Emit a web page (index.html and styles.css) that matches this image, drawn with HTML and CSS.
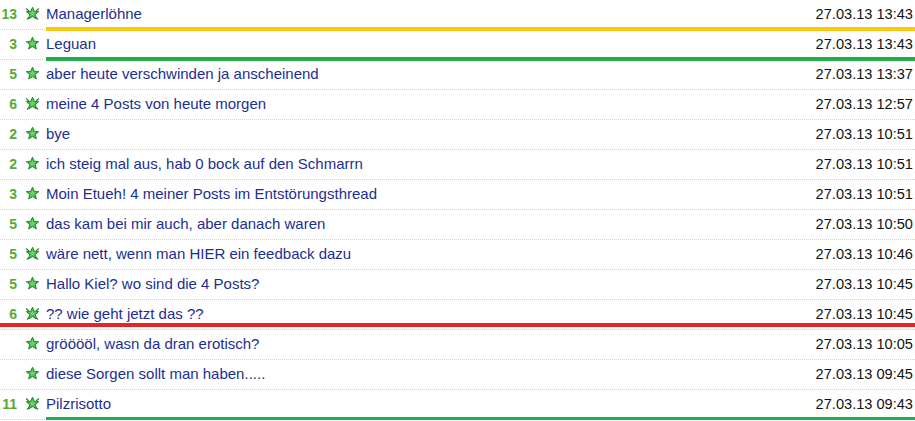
FILE: index.html
```html
<!DOCTYPE html>
<html lang="de">
<head>
<meta charset="utf-8">
<title>Threads</title>
<link rel="stylesheet" href="styles.css">
</head>
<body>
<svg width="0" height="0" class="defs">
  <defs>
    <symbol id="star" viewBox="0 0 16 16">
      <path d="M8 1.2 L9.9 5.6 L14.6 6 L11 9.1 L12.1 13.8 L8 11.3 L3.9 13.8 L5 9.1 L1.4 6 L6.1 5.6 Z" fill="#3dba45" stroke="#2b7f30" stroke-width="1" stroke-linejoin="round"/>
      <path d="M8 4 L8.9 6.6 L11.5 6.8 L9.5 8.5 L10.1 11 L8 9.6 L5.9 11 L6.5 8.5 L4.5 6.8 L7.1 6.6 Z" fill="#6fd16f"/>
    </symbol>
    <symbol id="hot" viewBox="0 0 16 16">
      <path d="M1.5 3 L3.8 5 M14.5 3 L12.2 5 M2.5 14 L4.5 12 M13.5 14 L11.5 12" stroke="#2b7f30" stroke-width="1.3" stroke-linecap="round"/>
      <path d="M8 1.2 L9.9 5.6 L14.6 6 L11 9.1 L12.1 13.8 L8 11.3 L3.9 13.8 L5 9.1 L1.4 6 L6.1 5.6 Z" fill="#3dba45" stroke="#2b7f30" stroke-width="1" stroke-linejoin="round"/>
      <path d="M8 4 L8.9 6.6 L11.5 6.8 L9.5 8.5 L10.1 11 L8 9.6 L5.9 11 L6.5 8.5 L4.5 6.8 L7.1 6.6 Z" fill="#6fd16f"/>
    </symbol>
  </defs>
</svg>
<div class="list">
  <div class="row"><span class="count">13</span><svg class="ico"><use href="#hot"/></svg><div class="main bar bar-yellow"><a class="title">Managerlöhne</a><span class="date">27.03.13 13:43</span></div></div>
  <div class="row"><span class="count">3</span><svg class="ico"><use href="#star"/></svg><div class="main bar bar-green"><a class="title">Leguan</a><span class="date">27.03.13 13:43</span></div></div>
  <div class="row"><span class="count">5</span><svg class="ico"><use href="#star"/></svg><div class="main"><a class="title">aber heute verschwinden ja anscheinend</a><span class="date">27.03.13 13:37</span></div></div>
  <div class="row"><span class="count">6</span><svg class="ico"><use href="#hot"/></svg><div class="main"><a class="title">meine 4 Posts von heute morgen</a><span class="date">27.03.13 12:57</span></div></div>
  <div class="row"><span class="count">2</span><svg class="ico"><use href="#star"/></svg><div class="main"><a class="title">bye</a><span class="date">27.03.13 10:51</span></div></div>
  <div class="row"><span class="count">2</span><svg class="ico"><use href="#star"/></svg><div class="main"><a class="title">ich steig mal aus, hab 0 bock auf den Schmarrn</a><span class="date">27.03.13 10:51</span></div></div>
  <div class="row"><span class="count">3</span><svg class="ico"><use href="#star"/></svg><div class="main"><a class="title">Moin Etueh! 4 meiner Posts im Entstörungsthread</a><span class="date">27.03.13 10:51</span></div></div>
  <div class="row"><span class="count">5</span><svg class="ico"><use href="#star"/></svg><div class="main"><a class="title">das kam bei mir auch, aber danach waren</a><span class="date">27.03.13 10:50</span></div></div>
  <div class="row"><span class="count">5</span><svg class="ico"><use href="#hot"/></svg><div class="main"><a class="title">wäre nett, wenn man HIER ein feedback dazu</a><span class="date">27.03.13 10:46</span></div></div>
  <div class="row"><span class="count">5</span><svg class="ico"><use href="#star"/></svg><div class="main"><a class="title">Hallo Kiel? wo sind die 4 Posts?</a><span class="date">27.03.13 10:45</span></div></div>
  <div class="row row-red"><span class="count">6</span><svg class="ico"><use href="#hot"/></svg><div class="main"><a class="title">?? wie geht jetzt das ??</a><span class="date">27.03.13 10:45</span></div></div>
  <div class="row"><span class="count"></span><svg class="ico"><use href="#star"/></svg><div class="main"><a class="title">grööööl, wasn da dran erotisch?</a><span class="date">27.03.13 10:05</span></div></div>
  <div class="row"><span class="count"></span><svg class="ico"><use href="#star"/></svg><div class="main"><a class="title">diese Sorgen sollt man haben.....</a><span class="date">27.03.13 09:45</span></div></div>
  <div class="row"><span class="count">11</span><svg class="ico"><use href="#hot"/></svg><div class="main bar bar-green"><a class="title">Pilzrisotto</a><span class="date">27.03.13 09:43</span></div></div>
</div>
</body>
</html>
```
FILE: styles.css
```css
html, body {
  margin: 0;
  padding: 0;
  background: #fff;
}
.defs {
  position: absolute;
  width: 0;
  height: 0;
}
.list {
  width: 915px;
  font-family: "Liberation Sans", Arial, sans-serif;
  font-size: 14px;
}
.row {
  display: flex;
  align-items: flex-start;
  height: 29px;
  border-bottom: 1px dotted #d4d0d8;
}
.count {
  width: 17px;
  text-align: right;
  font-weight: bold;
  color: #55aa35;
  line-height: 29px;
  flex: none;
}
.ico {
  width: 15px;
  height: 15px;
  margin: 6px 0 0 8px;
  flex: none;
}
.main {
  flex: 1;
  display: flex;
  justify-content: space-between;
  margin-left: 6px;
  height: 29px;
  line-height: 28px;
}
.title {
  color: #1c2f8f;
  font-size: 15px;
  text-decoration: none;
  white-space: nowrap;
}
.date {
  color: #111;
  font-size: 14.6px;
  padding-right: 2px;
}
.bar {
  box-sizing: border-box;
  height: 31px;
  border-bottom: 4px solid;
}
.bar-yellow { border-bottom-color: #fcc70d; }
.bar-green { border-bottom-color: #1fae47; }
.row-red {
  background: linear-gradient(#e3242b, #e3242b) no-repeat 0 23px / 100% 4px;
}
```
